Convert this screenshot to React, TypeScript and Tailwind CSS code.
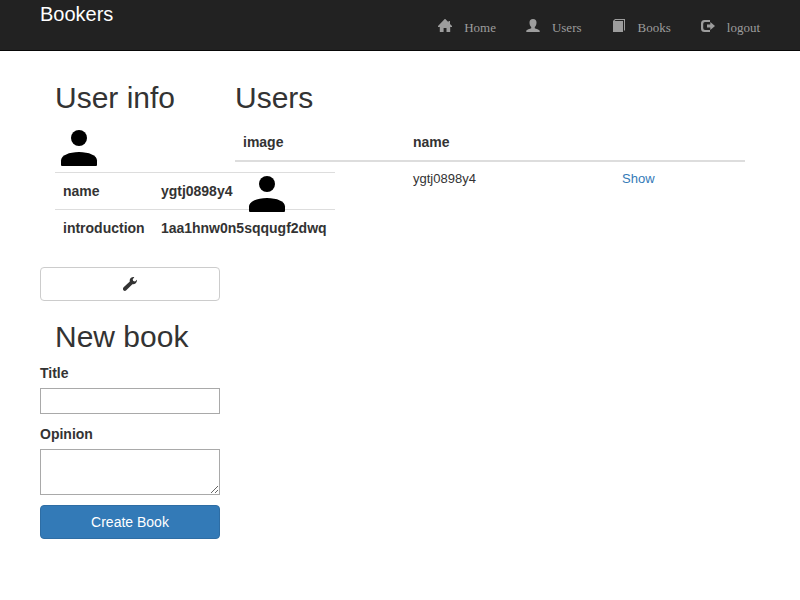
import type { ReactNode } from "react";

function Glyph({ children }: { children: ReactNode }) {
  return (
    <svg
      className="h-[14px] w-[14px] shrink-0"
      viewBox="0 0 14 14"
      fill="currentColor"
      aria-hidden="true"
    >
      {children}
    </svg>
  );
}

function Avatar() {
  return (
    <svg className="block h-12 w-12" viewBox="0 0 48 48" role="img" aria-label="avatar">
      <circle cx="24" cy="14" r="8" />
      <path d="M6 36.500C6 31.500 14 28 24 28s18 3.500 18 8.500V41q0 1-1 1H7q-1 0-1-1z" />
    </svg>
  );
}

const links = [
  {
    label: "Home",
    icon: (
      <path d="M7 -.3 10.500 3.300V2H12V4.900L14.300 7.300V8H12.200V13H8.500V9H5.600V13H1.800V8H-.3V7.300L7-.3Z" />
    ),
  },
  {
    label: "Users",
    icon: (
      <path d="M7 0C4.600 0 3.500 1.400 3.500 3.500C3.500 5.500 4.200 7 5.200 8V9.200C4.200 10 .3 10.300.3 12V13H13.700V12C13.700 10.300 9.800 10 8.800 9.200V8C9.800 7 10.500 5.500 10.500 3.500C10.500 1.400 9.400 0 7 0Z" />
    ),
  },
  {
    label: "Books",
    icon: <path d="M3 0H13V11L12 12V1H3.500L2.500 2H11V13H1V2L3 0Z" />,
  },
  {
    label: "logout",
    icon: (
      <path d="M3.500 1H9V3H4Q2.200 3 2.200 5V9Q2.200 11 4 11H9V13H3.500Q0 13 0 9.500V4.500Q0 1 3.500 1ZM9.300 3 14 7 9.300 11V8.500H6V5.500H9.300Z" />
    ),
  },
];

const user = { name: "ygtj0898y4", introduction: "1aa1hnw0n5sqqugf2dwq" };

export default function App() {
  return (
    <div className="min-h-screen bg-white font-['Liberation_Sans',Arial,sans-serif] text-sm leading-5 text-[#333]">
      <header className="h-[51px] border-b border-[#080808] bg-[#222]">
        <div className="mx-auto flex max-w-[750px] items-start justify-between px-[15px]">
          <a href="#" className="pt-1 text-xl leading-5 text-white">
            Bookers
          </a>
          <nav className="flex gap-[30px] pt-[18px] font-['Liberation_Serif',serif] text-[13px] text-[#9d9d9d]">
            {links.map((link) => (
              <a key={link.label} href="#" className="flex items-start gap-3">
                <span className="pt-px">
                  <Glyph>{link.icon}</Glyph>
                </span>
                {link.label}
              </a>
            ))}
          </nav>
        </div>
      </header>

      <main className="mx-auto grid max-w-[750px] grid-cols-4 px-[15px] pt-[30px]">
        <aside className="min-w-0">
          <div className="px-[15px]">
            <h2 className="mb-[10px] text-[30px] leading-[33px] whitespace-nowrap">User info</h2>
            <Avatar />
            <table className="mb-[21px] w-[280px] text-left whitespace-nowrap">
              <tbody>
                <tr>
                  <th className="border-t border-[#ddd] p-2">name</th>
                  <th className="border-t border-[#ddd] p-2">{user.name}</th>
                </tr>
                <tr>
                  <th className="border-t border-[#ddd] p-2">introduction</th>
                  <th className="border-t border-[#ddd] p-2">{user.introduction}</th>
                </tr>
              </tbody>
            </table>
          </div>
          <button
            type="button"
            aria-label="Edit user"
            className="flex h-[34px] w-full items-center justify-center rounded border border-[#ccc] bg-white"
          >
            <Glyph>
              <path d="M14 2.800 12 4.500 10.200 4.100 9.700 2.200 11.300.2C9.500-.3 7 .8 6.700 3L6.800 4.600.4 10.600Q-.5 11.800.4 13.200 1.600 14.400 3 13.600L9.400 7.200C12 7.600 14.200 5.500 14 2.800Z" />
            </Glyph>
          </button>

          <h2 className="mt-[19px] mb-[10px] px-[15px] text-[30px] leading-[33px] whitespace-nowrap">
            New book
          </h2>
          <form onSubmit={(event) => event.preventDefault()}>
            <label htmlFor="title" className="mb-[5px] block font-bold">
              Title
            </label>
            <input
              id="title"
              type="text"
              className="mb-[10px] block h-[26px] w-full border border-[#a9a9a9] px-1"
            />
            <label htmlFor="opinion" className="mb-[5px] block font-bold">
              Opinion
            </label>
            <textarea
              id="opinion"
              className="mb-[10px] block h-[46px] w-full border border-[#a9a9a9] p-0.5"
            />
            <button
              type="submit"
              className="block h-[34px] w-full rounded border border-[#2e6da4] bg-[#337ab7] text-white"
            >
              Create Book
            </button>
          </form>
        </aside>

        <section className="relative col-span-3 min-w-0 px-[15px]">
          <h2 className="mb-[10px] text-[30px] leading-[33px]">Users</h2>
          <table className="w-full table-fixed text-left">
            <colgroup>
              <col className="w-1/3" />
              <col className="w-[41%]" />
              <col />
            </colgroup>
            <thead>
              <tr className="border-b-2 border-[#ddd]">
                <th className="p-2">image</th>
                <th className="p-2">name</th>
                <th className="p-2" />
              </tr>
            </thead>
            <tbody className="align-top text-[13px] leading-[18px]">
              <tr>
                <td className="p-2">
                  <Avatar />
                </td>
                <td className="p-2">{user.name}</td>
                <td className="p-2">
                  <a href="#" className="text-[#337ab7]">
                    Show
                  </a>
                </td>
              </tr>
            </tbody>
          </table>
        </section>
      </main>
    </div>
  );
}
